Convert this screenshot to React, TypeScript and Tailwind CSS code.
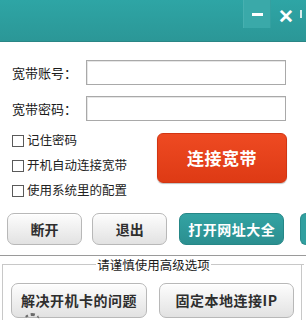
import React from 'react'

const font = { fontFamily: '"Noto Sans CJK SC", "Noto Sans", sans-serif' }

const Check: React.FC<{ label: string }> = ({ label }) => (
  <label className="flex items-center gap-[3px] h-[25px] text-[12.5px] text-[#222]">
    <span className="w-[12px] h-[12px] border border-[#5a5a5a] bg-white" />
    {label}
  </label>
)

const GrayButton: React.FC<{ children: React.ReactNode; className?: string }> = ({ children, className = '' }) => (
  <button
    className={`rounded-[7px] border border-[#b8b8b8] bg-gradient-to-b from-[#fdfdfd] to-[#e2e2e2] text-[#2e2e2e] font-bold shadow-[inset_0_1px_0_#fff] ${className}`}
  >
    {children}
  </button>
)

export default function App() {
  return (
    <div style={font} className="w-[306px] h-[320px] overflow-hidden bg-white relative">
      {/* Title bar */}
      <div className="h-[42px] bg-gradient-to-b from-[#2ea5a5] to-[#2b9797] border-b border-[#2a8686] flex items-start justify-end">
        <button className="w-[27px] h-[28px] bg-[#3aa9a9] border-l border-[#47b0b0] flex items-center justify-center">
          <span className="w-[11px] h-[3px] bg-white" />
        </button>
        <button className="w-[30px] h-[28px] border-l border-[#34a0a0] flex items-center justify-center text-white text-[19px] font-bold leading-none">
          ✕
        </button>
        <div className="w-[6px] h-[28px] flex items-center">
          <span className="w-[2px] h-[8px] bg-white/80" />
        </div>
      </div>

      {/* Account fields */}
      <div className="pt-[18px] pl-[12px] flex flex-col gap-[11px]">
        <div className="flex items-center h-[25px]">
          <span className="w-[74px] text-[13px] text-[#1a1a1a]">宽带账号：</span>
          <div className="w-[200px] h-[25px] border border-[#a9a9a9] shadow-[inset_1px_1px_0_#e6e6e6]" />
        </div>
        <div className="flex items-center h-[25px]">
          <span className="w-[74px] text-[13px] text-[#1a1a1a]">宽带密码：</span>
          <div className="w-[200px] h-[25px] border border-[#a9a9a9] shadow-[inset_1px_1px_0_#e6e6e6]" />
        </div>
      </div>

      {/* Options + connect */}
      <div className="flex pl-[12px] pt-[7px]">
        <div className="flex flex-col w-[145px]">
          <Check label="记住密码" />
          <Check label="开机自动连接宽带" />
          <Check label="使用系统里的配置" />
        </div>
        <div className="pt-[5px]">
          <button className="w-[130px] h-[50px] rounded-[6px] bg-gradient-to-b from-[#ee4a22] to-[#de3a14] border border-[#d23512] text-white text-[17px] font-bold tracking-[0.5px] shadow-[0_1px_1px_rgba(0,0,0,0.25)]">
            连接宽带
          </button>
        </div>
      </div>

      {/* Action buttons */}
      <div className="flex items-center pl-[7px] pt-[10px] gap-[10px]">
        <GrayButton className="w-[76px] h-[32px] text-[14px]">断开</GrayButton>
        <GrayButton className="w-[76px] h-[32px] text-[14px]">退出</GrayButton>
        <button className="ml-[2px] w-[106px] h-[32px] rounded-[7px] border border-[#268787] bg-gradient-to-b from-[#33a3a3] to-[#2b8f90] text-white text-[14px] font-bold tracking-[0.5px]">
          打开网址大全
        </button>
        <div className="ml-[6px] w-[6px] h-[32px] rounded-l-[6px] border border-r-0 border-[#2a8d8d] bg-[#31a0a0]" />
      </div>

      {/* Advanced group */}
      <div className="mt-[10px] border-t border-[#9a9a9a]" />
      <div className="relative mt-[8px] mx-[2px] h-[70px] border-l border-t border-[#c8c8c8]">
        <div className="absolute -top-[9px] left-0 right-0 flex justify-center">
          <span className="bg-white px-[1px] text-[12.5px] leading-[17px] text-[#1a1a1a]">请谨慎使用高级选项</span>
        </div>
        <div className="absolute top-0 bottom-0 right-[2px] border-l border-[#c8c8c8]" />
        <div className="flex gap-[12px] pl-[8px] pt-[18px]">
          <GrayButton className="w-[136px] h-[35px] text-[14px] tracking-[0.5px]">解决开机卡的问题</GrayButton>
          <GrayButton className="w-[135px] h-[35px] text-[14px] tracking-[0.5px]">固定本地连接IP</GrayButton>
        </div>
      </div>

      {/* bottom-left decoration */}
      <div className="absolute left-[24px] top-[313px] w-[16px] h-[10px] rounded-t-full border-t-[3px] border-dotted border-[#6a6a6a]" />
    </div>
  )
}
